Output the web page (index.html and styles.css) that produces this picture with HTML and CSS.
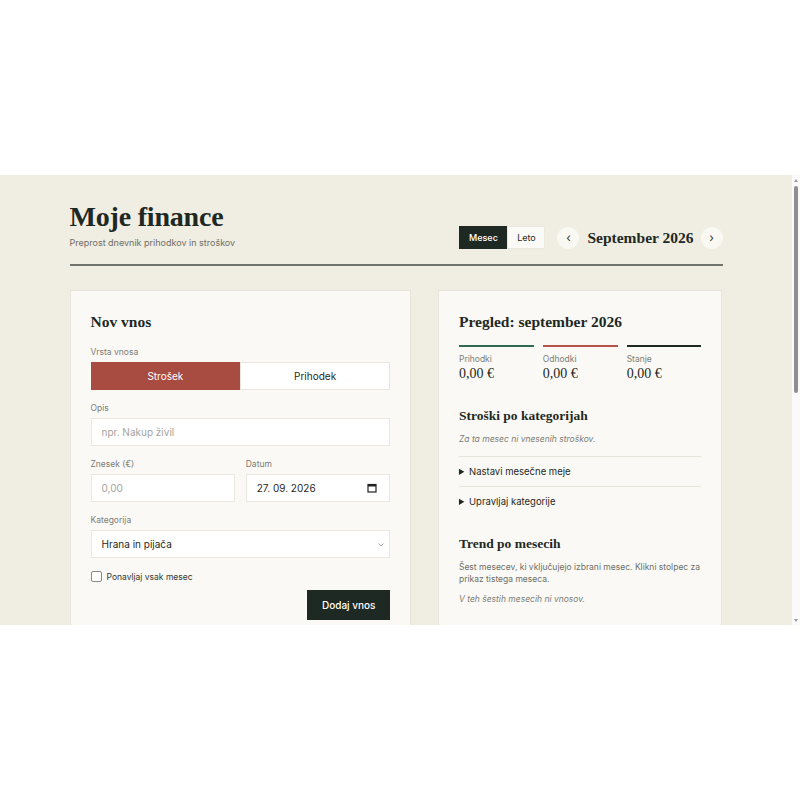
FILE: index.html
```html
<!DOCTYPE html>
<html lang="sl">
<head>
    <meta charset="UTF-8">
    <title>Moje finance</title>
    <link rel="stylesheet" href="styles.css">
</head>
<body>
<div class="frame">
    <div class="view">
        <div class="page">
            <header class="top">
                <div class="brand">
                    <h1>Moje finance</h1>
                    <p>Preprost dnevnik prihodkov in stroškov</p>
                </div>
                <div class="controls">
                    <div class="mode">
                        <button class="on">Mesec</button>
                        <button>Leto</button>
                    </div>
                    <button class="round">&#8249;</button>
                    <span class="period">September 2026</span>
                    <button class="round">&#8250;</button>
                </div>
            </header>

            <div class="grid">
                <section class="card">
                    <h2>Nov vnos</h2>
                    <div class="field">
                        <span class="label">Vrsta vnosa</span>
                        <div class="kind">
                            <button class="on">Strošek</button>
                            <button>Prihodek</button>
                        </div>
                    </div>
                    <div class="field">
                        <span class="label">Opis</span>
                        <input class="input" type="text" placeholder="npr. Nakup živil">
                    </div>
                    <div class="row">
                        <div class="field">
                            <span class="label">Znesek (€)</span>
                            <input class="input" type="text" placeholder="0,00">
                        </div>
                        <div class="field">
                            <span class="label">Datum</span>
                            <div class="input date">
                                <span>27. 09. 2026</span>
                                <svg width="10" height="10" viewBox="0 0 10 10">
                                    <rect x="1" y="1.5" width="8" height="7.5" fill="none" stroke="#222" stroke-width="1.2"/>
                                    <rect x="1" y="1.5" width="8" height="2" fill="#222"/>
                                </svg>
                            </div>
                        </div>
                    </div>
                    <div class="field">
                        <span class="label">Kategorija</span>
                        <div class="select">
                            <select class="input">
                                <option>Hrana in pijača</option>
                            </select>
                            <svg width="6" height="4" viewBox="0 0 6 4"><path d="M0.5 0.5 L3 3 L5.5 0.5" fill="none" stroke="#999" stroke-width="0.8"/></svg>
                        </div>
                    </div>
                    <label class="check"><input type="checkbox"> Ponavljaj vsak mesec</label>
                    <div class="actions">
                        <button class="primary">Dodaj vnos</button>
                    </div>
                </section>

                <section class="card">
                    <h2>Pregled: september 2026</h2>
                    <div class="stats">
                        <div class="stat in">
                            <span class="label">Prihodki</span>
                            <strong>0,00 €</strong>
                        </div>
                        <div class="stat out">
                            <span class="label">Odhodki</span>
                            <strong>0,00 €</strong>
                        </div>
                        <div class="stat bal">
                            <span class="label">Stanje</span>
                            <strong>0,00 €</strong>
                        </div>
                    </div>

                    <h3>Stroški po kategorijah</h3>
                    <p class="empty">Za ta mesec ni vnesenih stroškov.</p>
                    <details>
                        <summary>Nastavi mesečne meje</summary>
                    </details>
                    <details>
                        <summary>Upravljaj kategorije</summary>
                    </details>

                    <h3 class="trend">Trend po mesecih</h3>
                    <p class="note">Šest mesecev, ki vključujejo izbrani mesec. Klikni stolpec za prikaz tistega meseca.</p>
                    <p class="empty">V teh šestih mesecih ni vnosov.</p>
                </section>
            </div>

            <section class="card list">
                <h2>Vnosi v septembru</h2>
                <p class="empty">Ni vnosov za izbrano obdobje.</p>
            </section>
        </div>
    </div>
    <div class="scrollbar">
        <span class="arrow up"></span>
        <span class="thumb"></span>
        <span class="arrow down"></span>
    </div>
</div>
</body>
</html>
```

FILE: styles.css
```css
* {
    box-sizing: border-box;
}

html, body {
    margin: 0;
    padding: 0;
    background: #fff;
}

body {
    font-family: Inter, "Liberation Sans", sans-serif;
    color: #1f2924;
}

button, input, select {
    font-family: inherit;
}

/* window with its own scroll bar */

.frame {
    display: flex;
    margin-top: 175px;
    height: 450px;
    background: #f0ede2;
}

.view {
    flex: 1;
    overflow: hidden;
}

.scrollbar {
    display: flex;
    flex-direction: column;
    align-items: center;
    width: 8px;
    padding: 4px 0 3px;
    background: #fafafa;
}

.scrollbar .thumb {
    width: 4px;
    height: 207px;
    margin-top: 4px;
    border-radius: 2px;
    background: #8e8e8e;
}

.scrollbar .arrow {
    width: 0;
    height: 0;
    border-left: 2.5px solid transparent;
    border-right: 2.5px solid transparent;
}

.scrollbar .up {
    border-bottom: 3px solid #9a9a9a;
}

.scrollbar .down {
    margin-top: auto;
    border-top: 3px solid #9a9a9a;
}

.page {
    width: 653px;
    margin: 0 auto;
    padding: 27px 0 40px;
}

/* header */

.top {
    display: flex;
    align-items: flex-end;
    justify-content: space-between;
    padding-bottom: 15px;
    border-bottom: 2px solid #6f736b;
}

.brand h1 {
    margin: 0;
    font-family: "Liberation Serif", serif;
    font-size: 28px;
    font-weight: 700;
    line-height: 30px;
    letter-spacing: -0.2px;
}

.brand p {
    margin: 5px 0 0;
    font-size: 9px;
    line-height: 12px;
    color: #6e6f68;
}

.controls {
    display: flex;
    align-items: center;
    margin-bottom: 0;
}

.mode {
    display: flex;
    margin-right: 12px;
}

.mode button {
    width: 38px;
    height: 23px;
    padding: 0;
    border: 1px solid #ebe8de;
    background: #fbfaf6;
    font-size: 9px;
    color: #1f2924;
}

.mode button.on {
    width: 48px;
    background: #1f2924;
    border-color: #1f2924;
    color: #fff;
    font-weight: 500;
}

.round {
    width: 22px;
    height: 22px;
    padding: 0;
    border: 0;
    border-radius: 50%;
    background: #f9f8f3;
    font-size: 12px;
    line-height: 20px;
    color: #333;
}

.period {
    margin: 0 7px 0 8px;
    font-family: "Liberation Serif", serif;
    font-size: 15.5px;
    font-weight: 700;
}

/* cards */

.grid {
    display: grid;
    grid-template-columns: 1.2fr 1fr;
    gap: 27px;
    margin-top: 24px;
    align-items: start;
}

.card {
    background: #faf9f5;
    border: 1px solid #e7e4d9;
    padding: 21px 20px 22px;
}

.card h2 {
    margin: 0 0 15px;
    font-family: "Liberation Serif", serif;
    font-size: 15.5px;
    font-weight: 700;
    line-height: 20px;
}

.label {
    display: block;
    font-size: 8.5px;
    line-height: 11px;
    color: #7c7d76;
    margin-bottom: 4px;
}

.field {
    margin-bottom: 13px;
}

.kind {
    display: flex;
}

.kind button {
    flex: 1;
    height: 28px;
    border: 1px solid #e8e5dc;
    background: #fff;
    font-size: 10px;
    color: #1f2924;
}

.kind button.on {
    background: #a84b40;
    border-color: #a84b40;
    color: #fff;
}

.input {
    display: block;
    width: 100%;
    height: 28px;
    padding: 0 10px;
    border: 1px solid #ebe8e0;
    background: #fff;
    font-size: 10px;
    color: #1f2924;
    outline: none;
}

.input::placeholder {
    color: #a3a39e;
}

.row {
    display: grid;
    grid-template-columns: 1fr 1fr;
    gap: 11px;
}

.date {
    display: flex;
    align-items: center;
    justify-content: space-between;
    padding-right: 12px;
}

.select {
    position: relative;
}

.select select {
    appearance: none;
    -webkit-appearance: none;
    padding-left: 10px;
}

.select svg {
    position: absolute;
    right: 6px;
    top: 13px;
}

.check {
    display: flex;
    align-items: center;
    font-size: 8.5px;
    color: #33382f;
    margin-top: 0;
}

.check input {
    appearance: none;
    -webkit-appearance: none;
    width: 11px;
    height: 11px;
    margin: 0 5px 0 0;
    border: 1px solid #8a8a84;
    border-radius: 2px;
    background: #fff;
}

.actions {
    display: flex;
    justify-content: flex-end;
    margin-top: 8px;
}

.primary {
    height: 30px;
    padding: 0 14.5px;
    border: 0;
    background: #1f2924;
    color: #fff;
    font-size: 10px;
    font-weight: 500;
}

/* overview */

.stats {
    display: grid;
    grid-template-columns: repeat(3, 1fr);
    gap: 9px;
    margin: -2px 0 25px;
}

.stat {
    border-top: 2.5px solid #1f2924;
    padding-top: 7px;
}

.stat.in {
    border-color: #2f6b53;
}

.stat.out {
    border-color: #b4534a;
}

.stat .label {
    margin-bottom: 0;
}

.stat strong {
    display: block;
    font-family: "Liberation Serif", serif;
    font-size: 14px;
    font-weight: 400;
    line-height: 17px;
}

.card h3 {
    margin: 0 0 9px;
    font-family: "Liberation Serif", serif;
    font-size: 13.5px;
    font-weight: 700;
    line-height: 18px;
}

.card h3.trend {
    margin-top: 19px;
    margin-bottom: 8px;
}

.empty {
    margin: 0 0 12px;
    font-size: 8.5px;
    font-style: italic;
    color: #7c7d76;
}

.note {
    margin: 0 0 9px;
    font-size: 8.5px;
    line-height: 12px;
    color: #6e6f68;
}

details {
    border-top: 1px solid #e6e3da;
    padding: 9px 0 9px;
    font-size: 9.5px;
    color: #1f2924;
}

details summary {
    cursor: pointer;
}

.list {
    margin-top: 27px;
    min-height: 180px;
}
```
